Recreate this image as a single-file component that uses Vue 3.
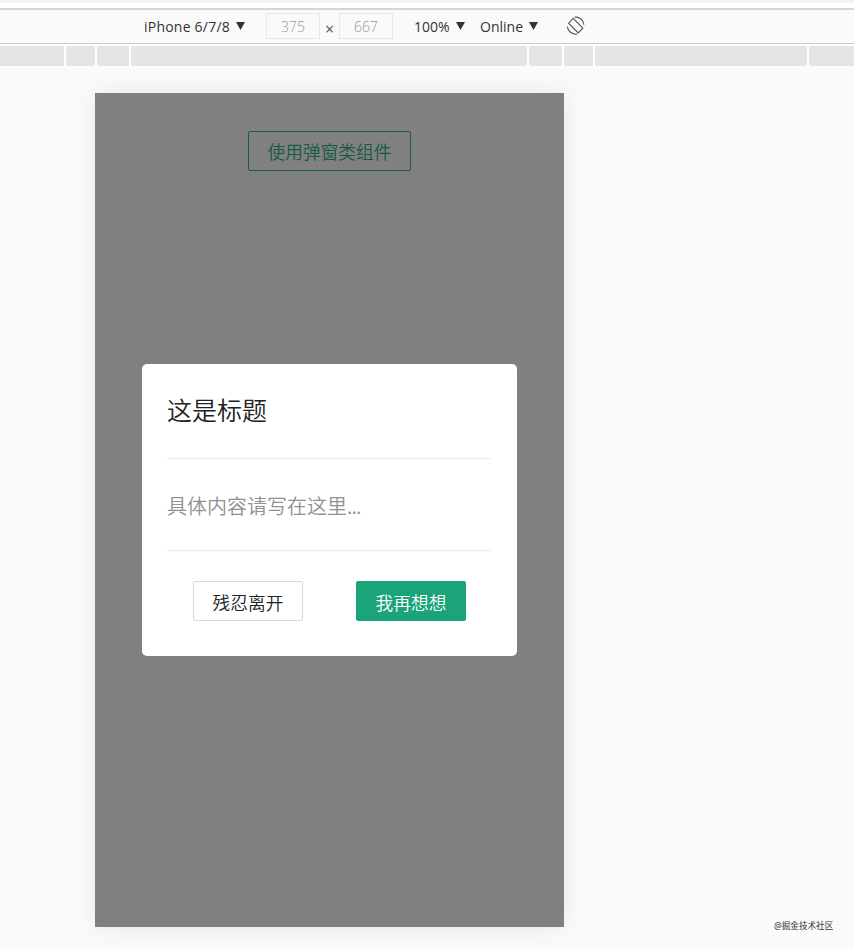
<script setup>
const ticks = [
  { flex: '0 0 64px' }, { flex: '0 0 29px' }, { flex: '0 0 32px' }, { flex: '0 0 396px' },
  { flex: '0 0 33px' }, { flex: '0 0 29px' }, { flex: '0 0 212px' }, { flex: '1 0 0' },
]
</script>

<template>
  <main class="page">
    <div class="tabs"></div>
    <header class="toolbar">
      <span class="device">iPhone 6/7/8</span><i class="caret"></i>
      <span class="size">375</span>
      <span class="times">×</span>
      <span class="size">667</span>
      <span class="zoom">100%</span><i class="caret"></i>
      <span class="network">Online</span><i class="caret"></i>
      <svg class="rotate" width="20" height="20" viewBox="0 0 20 20" fill="none" stroke="#555" stroke-width="1.1">
        <path d="M7.2 2.4 L2.6 7.2 L12.2 17 L16.8 12.2 Z" />
        <path d="M8.5 1.2 C13.5 .4 17.6 4.2 17.9 8.7 M11 18.1 C6 18.8 1.8 15 1.3 10.5" />
      </svg>
    </header>
    <div class="ruler"><span v-for="(t, i) in ticks" :key="i" :style="t"></span></div>
    <section class="stage">
      <div class="phone">
        <button class="btn open">使用弹窗类组件</button>
        <div class="dialog">
          <h1>这是标题</h1>
          <p>具体内容请写在这里<span class="dots">...</span></p>
          <footer>
            <button class="btn leave">残忍离开</button>
            <button class="btn stay">我再想想</button>
          </footer>
        </div>
      </div>
    </section>
    <small class="mark">@掘金技术社区</small>
  </main>
</template>

<style>
body { margin: 0; background: #fafafa; }
</style>
<style scoped>
* { box-sizing: border-box; }
.page { position: relative; width: 854px; height: 949px; overflow: hidden; background: #fafafa; font-family: "Noto Sans", "Noto Sans CJK SC", sans-serif; }
.tabs { height: 10px; background: #fff; border-top: 3px solid #f3f3f3; border-bottom: 2px solid #d6d6d6; }
.toolbar { height: 34px; display: flex; align-items: center; padding-left: 144px; border-bottom: 1px solid #c8cac8; font-family: "Open Sans", sans-serif; font-size: 14px; line-height: 20px; color: #333; white-space: nowrap; }
.device { width: 92px; letter-spacing: .22px; }
.caret { width: 9px; height: 8px; margin-top: -1px; background: #333; clip-path: polygon(0 0, 100% 0, 50% 100%); }
.size { width: 54px; height: 26px; margin-top: -1px; border: 1px solid #e8e8e8; text-align: center; line-height: 25px; color: #999; font-weight: 300; }
.caret + .size { margin-left: 21px; }
.times { width: 19px; text-align: center; font-size: 16px; padding-top: 4px; color: #555; }
.zoom { width: 42px; margin-left: 21px; }
.network { width: 49px; margin-left: 15px; }
.rotate { margin: -1px 0 0 28px; }
.ruler { display: flex; gap: 2px; height: 23px; padding: 2px 0 1px; background: #fff; }
.ruler span { background: #e5e5e5; }
.stage { padding: 26px 0 0 95px; }
.phone { width: 469px; height: 834px; background: #808080; display: flex; flex-direction: column; align-items: center; padding-top: 38px; box-shadow: 0 0 24px rgba(0, 0, 0, .08); }
.btn { height: 40px; padding: 0; border: 1px solid; border-radius: 2px; background: transparent; font-family: "Noto Sans CJK SC", sans-serif; font-weight: 350; font-size: 17.7px; line-height: 38px; }
.open { width: 163px; color: #175a42; border-color: #195f47; }
.dialog { width: 375px; height: 292px; margin-top: 193px; padding: 0 26px 0 25px; background: #fff; border-radius: 5px; font-family: "Noto Sans CJK SC", sans-serif; }
h1 { margin: 0; height: 95px; font-size: 25px; font-weight: 350; line-height: 90px; color: #222; border-bottom: 1px solid #ebebeb; }
p { margin: 0; height: 92px; font-size: 20px; font-weight: 350; line-height: 94px; color: #909090; border-bottom: 1px solid #ebebeb; }
.dots { letter-spacing: -.9px; }
footer { display: flex; gap: 53px; padding: 30px 0 0 26px; }
footer .btn { width: 110px; padding-top: 2px; line-height: 36px; }
.leave { color: #222; border-color: #d8d8d8; }
.stay { background: #1ba37a; color: #fff; border-color: #1ba37a; }
.mark { position: absolute; left: 774px; top: 920px; font-size: 8.6px; line-height: 12px; color: #333; white-space: nowrap; }
</style>
